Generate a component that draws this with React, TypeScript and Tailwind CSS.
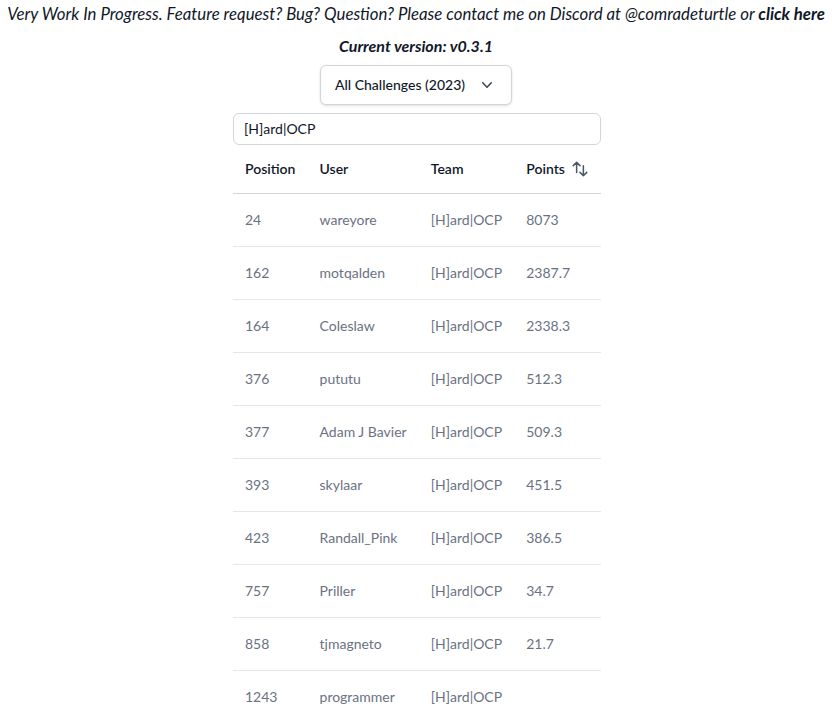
import { useState } from "react";

const rows = [
  { pos: 24, user: "wareyore", team: "[H]ard|OCP", points: "8073" },
  { pos: 162, user: "motqalden", team: "[H]ard|OCP", points: "2387.7" },
  { pos: 164, user: "Coleslaw", team: "[H]ard|OCP", points: "2338.3" },
  { pos: 376, user: "pututu", team: "[H]ard|OCP", points: "512.3" },
  { pos: 377, user: "Adam J Bavier", team: "[H]ard|OCP", points: "509.3" },
  { pos: 393, user: "skylaar", team: "[H]ard|OCP", points: "451.5" },
  { pos: 423, user: "Randall_Pink", team: "[H]ard|OCP", points: "386.5" },
  { pos: 757, user: "Priller", team: "[H]ard|OCP", points: "34.7" },
  { pos: 858, user: "tjmagneto", team: "[H]ard|OCP", points: "21.7" },
  { pos: 1243, user: "programmer", team: "[H]ard|OCP", points: "" },
];

export default function App() {
  const [query, setQuery] = useState("[H]ard|OCP");

  return (
    <div className="min-h-screen bg-white text-gray-900 font-['Lato',sans-serif]">
      <p className="text-center italic text-[16.8px] leading-6 pt-0.5 whitespace-nowrap">
        Very Work In Progress. Feature request? Bug? Question? Please contact me on Discord at @comradeturtle or{" "}
        <a href="#" className="font-bold">click here</a>
      </p>
      <p className="text-center italic font-bold text-base leading-6 mt-2">Current version: v0.3.1</p>

      <div className="flex justify-center mt-[7px]">
        <button className="inline-flex items-center gap-x-3 rounded-md border border-gray-300 bg-white px-3.5 py-[9px] text-sm font-medium text-gray-900 shadow-sm">
          All Challenges (2023)
          <svg viewBox="0 0 20 20" fill="currentColor" className="h-5 w-5 text-gray-700">
            <path
              fillRule="evenodd"
              d="M5.23 7.21a.75.75 0 011.06.02L10 11.17l3.71-3.94a.75.75 0 111.08 1.04l-4.25 4.5a.75.75 0 01-1.08 0l-4.25-4.5a.75.75 0 01.02-1.06z"
              clipRule="evenodd"
            />
          </svg>
        </button>
      </div>

      <div className="mx-auto mt-2 w-[368px] translate-x-px">
        <input
          value={query}
          onChange={(e) => setQuery(e.target.value)}
          className="block w-full rounded-md border border-gray-300 px-2.5 py-[5px] text-sm text-gray-900 focus:outline-none"
        />
        <table className="w-full text-left text-sm">
          <thead>
            <tr className="border-b border-gray-300">
              <th className="px-3 py-3.5 font-semibold">Position</th>
              <th className="px-3 py-3.5 font-semibold">User</th>
              <th className="px-3 py-3.5 font-semibold">Team</th>
              <th className="px-3 py-3.5 font-semibold">
                <span className="inline-flex items-center gap-1.5">
                  Points
                  <svg viewBox="0 0 24 24" fill="none" stroke="currentColor" strokeWidth={2} className="h-[18px] w-[18px] text-gray-600">
                    <path strokeLinecap="round" strokeLinejoin="round" d="M3 7.5 7.5 3m0 0L12 7.5M7.5 3v13.5m13.5 0L16.5 21m0 0L12 16.5m4.5 4.5V7.5" />
                  </svg>
                </span>
              </th>
            </tr>
          </thead>
          <tbody className="divide-y divide-gray-200 text-gray-500">
            {rows.map((r) => (
              <tr key={r.pos}>
                <td className="px-3 py-4">{r.pos}</td>
                <td className="px-3 py-4 whitespace-nowrap">{r.user}</td>
                <td className="px-3 py-4 whitespace-nowrap">{r.team}</td>
                <td className="px-3 py-4">{r.points}</td>
              </tr>
            ))}
          </tbody>
        </table>
      </div>
    </div>
  );
}
